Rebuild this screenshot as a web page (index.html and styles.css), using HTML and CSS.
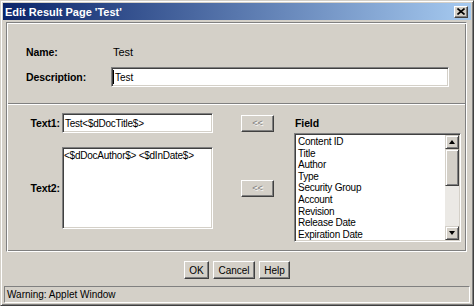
FILE: index.html
```
<!DOCTYPE html>
<html>
	<head>
		<meta charset="utf-8" />
		<title>Edit Result Page</title>
		<link rel="stylesheet" href="styles.css">
	</head>
	<body>
		<div class="window">
			<div class="titlebar">
				<span class="title">Edit Result Page 'Test'</span>
				<span class="close">
					<svg width="8" height="7" viewBox="0 0 8 7"><path d="M0.5 0.5 L7.5 6.5 M7.5 0.5 L0.5 6.5" stroke="#000" stroke-width="1.6" fill="none"/></svg>
				</span>
			</div>
			<div class="frame">
				<div class="top">
					<span class="label">Name:</span>
					<span class="value">Test</span>
					<span class="label">Description:</span>
					<div class="field desc"><span class="caret"></span>Test</div>
				</div>
				<div class="bottom">
					<div class="left">
						<span class="label rlabel">Text1:</span>
						<div class="field text1">Test&lt;$dDocTitle$&gt;</div>
						<div class="btn add">&lt;&lt;</div>
						<span class="label rlabel">Text2:</span>
						<div class="field area">&lt;$dDocAuthor$&gt; &lt;$dInDate$&gt;</div>
						<div class="btn add">&lt;&lt;</div>
					</div>
					<div class="right">
						<div class="label flabel">Field</div>
						<div class="list">
							<div class="items">
								<div class="item">Content ID</div>
								<div class="item">Title</div>
								<div class="item">Author</div>
								<div class="item">Type</div>
								<div class="item">Security Group</div>
								<div class="item">Account</div>
								<div class="item">Revision</div>
								<div class="item">Release Date</div>
								<div class="item">Expiration Date</div>
							</div>
							<div class="scrollbar">
								<div class="sb-btn"><span class="arrow up"></span></div>
								<div class="thumb"></div>
								<div class="track"></div>
								<div class="sb-btn"><span class="arrow down"></span></div>
							</div>
						</div>
					</div>
				</div>
			</div>
			<div class="buttons">
				<div class="btn ok">OK</div>
				<div class="btn cancel">Cancel</div>
				<div class="btn help">Help</div>
			</div>
			<div class="status">Warning: Applet Window</div>
		</div>
	</body>
</html>
```
FILE: styles.css
```
body{
	margin:0;
	background-color:#d4d0c8;
	font-family:"Liberation Sans", Arial, sans-serif;
	color:#000;
}
.window{
	width:474px;
	height:306px;
	box-sizing:border-box;
	border:1px solid;
	border-color:#d4d0c8 #404040 #404040 #d4d0c8;
	box-shadow:inset 1px 1px #fff, inset -1px -1px #808080;
	padding:2px;
	display:flex;
	flex-direction:column;
}
.titlebar{
	height:17px;
	flex-shrink:0;
	display:flex;
	align-items:center;
	justify-content:space-between;
	padding:0 3px 0 2px;
	background:linear-gradient(to right, #0a246a, #a6caf0);
}
.title{
	color:#fff;
	font-weight:bold;
	font-size:11px;
}
.close{
	width:14px;
	height:12px;
	box-sizing:border-box;
	background-color:#d4d0c8;
	border:1px solid;
	border-color:#fff #404040 #404040 #fff;
	box-shadow:inset -1px -1px #808080;
	display:flex;
	align-items:center;
	justify-content:center;
}
.frame{
	margin:2px 4px 0 3px;
	height:230px;
	flex-shrink:0;
	box-sizing:border-box;
	border:1px solid;
	border-color:#808080 #fff #fff #808080;
	box-shadow:inset 1px 1px #fff, inset -1px -1px #808080;
	padding:1px;
}
.label{
	font-weight:bold;
	font-size:10.5px;
	letter-spacing:-0.1px;
}
.top{
	height:80px;
	box-sizing:border-box;
	border-bottom:1px solid #808080;
	box-shadow:0 1px #fff;
	padding:21px 0 0 18px;
	display:grid;
	grid-template-columns:85px 338px;
	grid-template-rows:14px 20px;
	row-gap:8px;
	align-items:center;
	align-content:start;
}
.value{
	font-size:11px;
	padding-left:2px;
}
.field{
	background-color:#fff;
	box-sizing:border-box;
	border:1px solid;
	border-color:#808080 #fff #fff #808080;
	box-shadow:inset 1px 1px #404040, inset -1px -1px #d4d0c8;
	font-size:10px;
	letter-spacing:-0.25px;
	height:100%;
}
.desc{
	display:flex;
	align-items:center;
	padding-left:1px;
	letter-spacing:0;
}
.caret{
	width:1px;
	height:14px;
	background-color:#000;
	margin-right:1px;
}
.bottom{
	display:flex;
	padding-top:9px;
}
.left{
	display:grid;
	grid-template-columns:54px 151px 61px;
	grid-template-rows:20px 82px;
	row-gap:14px;
	align-items:center;
}
.rlabel{
	text-align:right;
	padding-right:2px;
}
.text1{
	display:flex;
	align-items:center;
	padding-left:2px;
}
.area{
	padding:2px 0 0 1px;
	line-height:11px;
}
.btn{
	box-sizing:border-box;
	background-color:#d4d0c8;
	border:1px solid;
	border-color:#fff #404040 #404040 #fff;
	box-shadow:inset -1px -1px #808080;
	display:flex;
	align-items:center;
	justify-content:center;
	font-size:10px;
}
.add{
	width:33px;
	height:17px;
	justify-self:end;
	color:#808080;
	text-shadow:1px 1px #fff;
	font-size:9px;
}
.right{
	margin-left:20px;
	padding-top:4px;
}
.flabel{
	line-height:12px;
	padding-left:1px;
}
.list{
	margin-top:4px;
	width:167px;
	height:109px;
	box-sizing:border-box;
	border:1px solid;
	border-color:#808080 #fff #fff #808080;
	box-shadow:inset 1px 1px #404040, inset -1px -1px #d4d0c8;
	padding:1px;
	background-color:#fff;
	display:flex;
}
.items{
	flex:1;
	overflow:hidden;
	padding:1px 0 0 2px;
	font-size:10px;
	letter-spacing:-0.25px;
}
.item{
	line-height:11.6px;
	white-space:nowrap;
}
.scrollbar{
	width:14px;
	display:flex;
	flex-direction:column;
}
.sb-btn, .thumb{
	box-sizing:border-box;
	background-color:#d4d0c8;
	border:1px solid;
	border-color:#d4d0c8 #404040 #404040 #d4d0c8;
	box-shadow:inset 1px 1px #fff, inset -1px -1px #808080;
}
.sb-btn{
	height:14px;
	display:flex;
	align-items:center;
	justify-content:center;
}
.thumb{
	height:37px;
}
.track{
	flex:1;
	background-color:#ebe9e5;
}
.arrow{
	width:0;
	height:0;
	border-left:3.5px solid transparent;
	border-right:3.5px solid transparent;
}
.arrow.up{
	border-bottom:4px solid #000;
}
.arrow.down{
	border-top:4px solid #000;
}
.buttons{
	display:flex;
	justify-content:center;
	gap:4px;
	margin-top:9px;
	height:18px;
	flex-shrink:0;
}
.ok{
	width:25px;
}
.cancel{
	width:42px;
}
.help{
	width:31px;
}
.status{
	margin:7px 1px 0 1px;
	height:17px;
	flex-shrink:0;
	box-sizing:border-box;
	border:1px solid;
	border-color:#808080 #fff #fff #808080;
	display:flex;
	align-items:center;
	padding-left:2px;
	font-size:10px;
}
```
